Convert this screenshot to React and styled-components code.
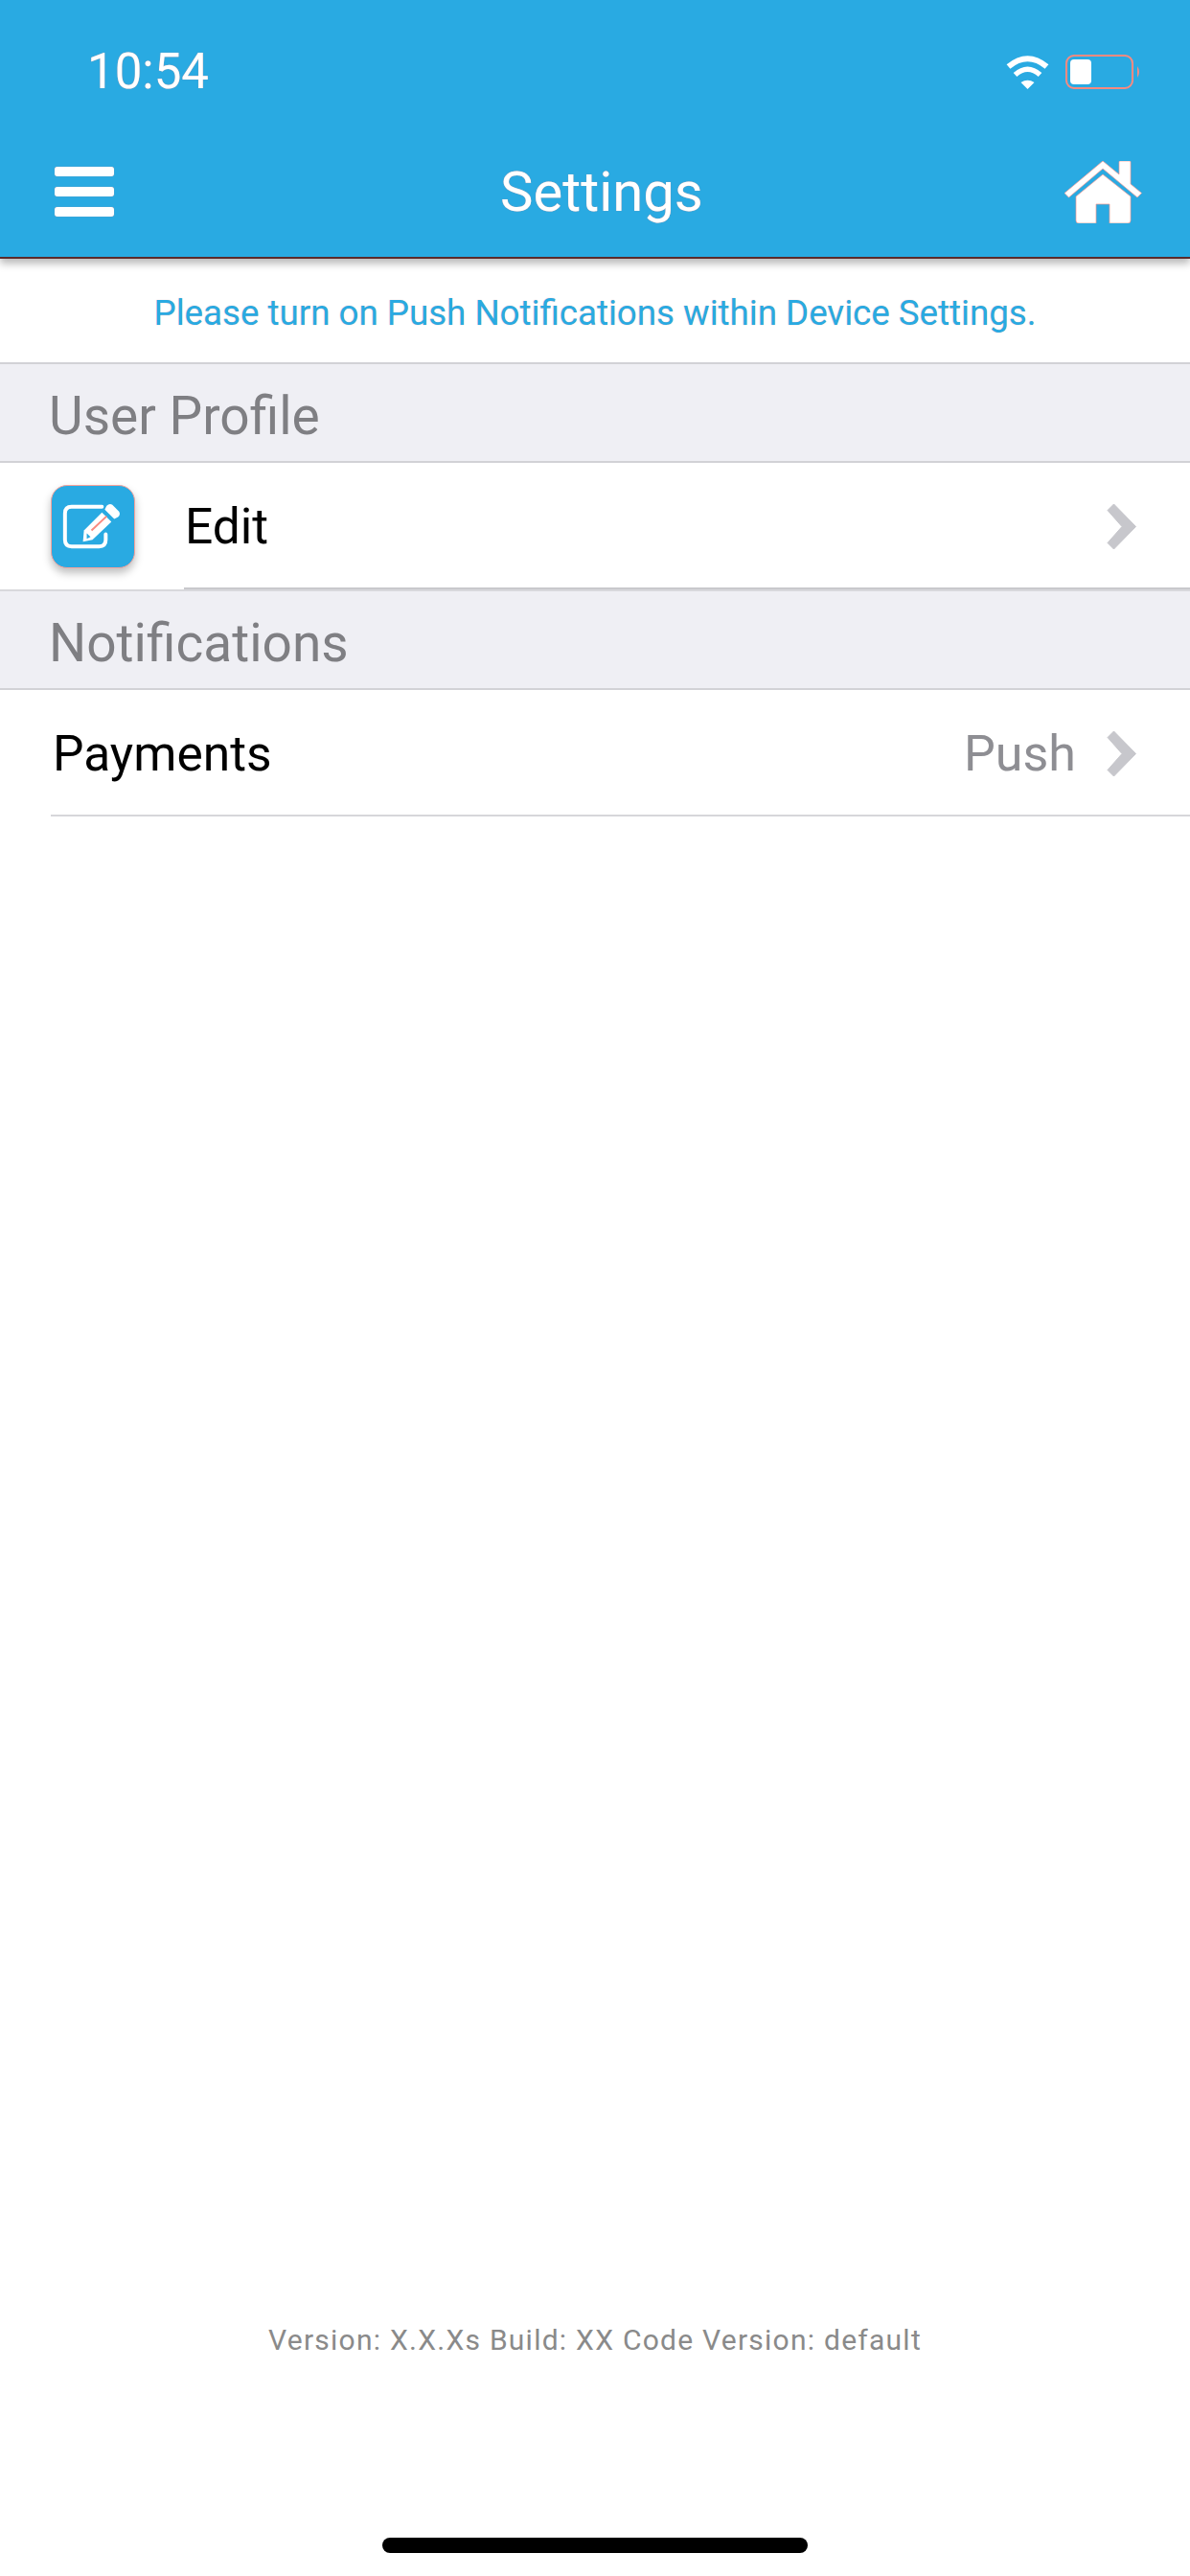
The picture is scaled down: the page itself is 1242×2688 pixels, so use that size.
import styled, { createGlobalStyle } from 'styled-components';

const GlobalStyle = createGlobalStyle`
  html, body {
    margin: 0;
    padding: 0;
    background: #ffffff;
    font-family: Roboto, "Liberation Sans", sans-serif;
  }
`;

const Screen = styled.div`
  width: 1242px;
  height: 2688px;
  display: flex;
  flex-direction: column;
  overflow: hidden;
  background: #ffffff;
`;

const Header = styled.header`
  background: #29aae2;
  height: 268px;
  border-bottom: 2px solid #5a2a2a;
  box-shadow: 0 5px 8px rgba(0, 0, 0, 0.28);
  position: relative;
  z-index: 1;
  color: #ffffff;
  text-shadow: 0 0 1px rgba(255, 130, 120, 0.75);
`;

const StatusBar = styled.div`
  height: 150px;
  display: flex;
  align-items: center;
  padding: 0 50px 0 91px;
`;

const Time = styled.span`
  font-size: 51px;
  line-height: 50px;
  flex: 1;
`;

const StatusIcons = styled.div`
  display: flex;
  align-items: center;
  gap: 16px;
`;

const NavBar = styled.div`
  height: 100px;
  display: grid;
  grid-template-columns: 465px auto 1fr;
  align-items: center;
  padding: 0 50px 0 57px;
`;

const Burger = styled.div`
  width: 62px;
  display: flex;
  flex-direction: column;
  gap: 11px;
`;

const BurgerBar = styled.span`
  height: 10px;
  border-radius: 3px;
  background: #ffffff;
  box-shadow: 0 0 1px rgba(255, 130, 120, 0.75);
`;

const Title = styled.h1`
  margin: 0;
  font-size: 58px;
  line-height: 70px;
  font-weight: 400;
`;

const HomeButton = styled.div`
  justify-self: end;
  display: flex;
`;

const Banner = styled.div`
  height: 110px;
  box-sizing: border-box;
  padding-top: 5px;
  display: flex;
  align-items: center;
  justify-content: center;
  border-bottom: 2px solid #d2d2d6;
  color: #29aae2;
  font-size: 36.7px;
  text-shadow: 0 0 1px rgba(255, 130, 120, 0.6);
`;

const SectionHeader = styled.div`
  height: 94px;
  padding: 7px 0 0 51px;
  display: flex;
  align-items: center;
  background: #efeff4;
  border-top: ${(p) => (p.$topLine ? '2px solid #d8d8dc' : 'none')};
  border-bottom: 2px solid #d2d2d6;
  color: #7f7f83;
  font-size: 55px;
`;

const Row = styled.div`
  height: 132px;
  display: flex;
  align-items: center;
  gap: 52px;
  padding: 0 55px 0 53px;
  position: relative;
`;

// line under a row, it starts where the row's label starts
const RowLine = styled.span`
  position: absolute;
  left: ${(p) => p.$left}px;
  right: 0;
  bottom: 0;
  height: 2px;
  background: ${(p) => p.$color};
`;

const IconTile = styled.div`
  width: 88px;
  height: 87px;
  border-radius: 17px;
  background: #29aae2;
  border: 1px solid #f8a39b;
  box-sizing: border-box;
  box-shadow: 0 5px 9px rgba(0, 0, 0, 0.25);
  display: flex;
`;

const RowLabel = styled.span`
  flex: 1;
  font-size: 51.5px;
  color: #000000;
  padding-left: ${(p) => p.$inset || 0}px;
`;

const RowDetail = styled.span`
  font-size: 52px;
  color: #8e8e93;
  margin-right: -20px;
`;

const Footer = styled.footer`
  margin-top: auto;
  display: flex;
  flex-direction: column;
  align-items: center;
`;

const Version = styled.div`
  font-size: 30px;
  line-height: 34px;
  letter-spacing: 1.25px;
  color: #8a8a8a;
  margin-bottom: 189px;
`;

const HomeIndicator = styled.div`
  width: 444px;
  height: 16px;
  border-radius: 8px;
  background: #000000;
  margin-bottom: 24px;
`;

const WifiIcon = () => (
  <svg width="47" height="36" viewBox="0 0 47 36">
    <path d="M3.5 12.5 Q23.5 -4 43.5 12.5" fill="none" stroke="#fff" strokeWidth="6" />
    <path d="M10.5 21 Q23.5 9.5 36.5 21" fill="none" stroke="#fff" strokeWidth="5.5" />
    <path d="M16.5 29 Q23.5 24.5 30.5 29 L23.5 36 Z" fill="#fff" />
  </svg>
);

const BatteryIcon = () => (
  <svg width="80" height="36" viewBox="0 0 80 36">
    <rect x="1" y="1" width="69" height="34" rx="8" fill="none" stroke="#f98a80" strokeWidth="2" />
    <rect x="5" y="5" width="22" height="26" rx="4" fill="#fff" />
    <path d="M75 12 Q79 18 75 24 Z" fill="#f98a80" />
  </svg>
);

const HomeIcon = () => (
  <svg width="81" height="65" viewBox="0 0 81 65">
    <path
      d="M40 0 L57 14 V1 Q57 0 58 0 H68 Q69 0 69 1 V24 L80.5 33.5 L76 38 L40 8 L4.5 38 L0 33.5 Z"
      fill="#fff"
      stroke="#fb9a90"
      strokeWidth="0.7"
    />
    <path
      d="M40 14 L69 37 V62 Q69 65 66 65 H47 V45 H33 V65 H15 Q12 65 12 62 V37 Z"
      fill="#fff"
      stroke="#fb9a90"
      strokeWidth="0.7"
    />
  </svg>
);

const EditIcon = () => (
  <svg width="86" height="85" viewBox="0 0 87 86">
    <path
      d="M53 22 H21 Q14 22 14 29 V57 Q14 64 21 64 H50 Q57 64 57 57 V51"
      fill="none"
      stroke="#fff"
      strokeWidth="4"
      strokeLinecap="round"
    />
    <path d="M53 28 L63 38 L43 57 L33 59 L34 47 Z" fill="#fff" />
    <path d="M58 21 Q61 18 64 20 L71 27 Q73 30 70 33 L66 35 L56 25 Z" fill="#fff" />
    <path d="M42 47 L58 32" stroke="#f98a80" strokeWidth="2" />
    <path d="M37 50 L41 54 L37 56 Z" fill="#29aae2" />
  </svg>
);

const Chevron = () => (
  <svg width="32" height="49" viewBox="0 0 32 49">
    <path
      d="M7.5 1 L30.5 24.5 L7.5 48 L1 41.5 L16 24.5 L1 7.5 Z"
      fill="#c7c7cc"
      stroke="#c7c7cc"
      strokeWidth="1"
      strokeLinejoin="round"
    />
  </svg>
);

const App = () => {
  return (
    <Screen>
      <GlobalStyle />
      <Header>
        <StatusBar>
          <Time>10:54</Time>
          <StatusIcons>
            <WifiIcon />
            <BatteryIcon />
          </StatusIcons>
        </StatusBar>
        <NavBar>
          <Burger>
            <BurgerBar />
            <BurgerBar />
            <BurgerBar />
          </Burger>
          <Title>Settings</Title>
          <HomeButton>
            <HomeIcon />
          </HomeButton>
        </NavBar>
      </Header>
      <Banner>Please turn on Push Notifications within Device Settings.</Banner>
      <SectionHeader>User Profile</SectionHeader>
      <Row>
        <IconTile>
          <EditIcon />
        </IconTile>
        <RowLabel>Edit</RowLabel>
        <Chevron />
        <RowLine $left={192} $color="#c8c8cc" />
      </Row>
      <SectionHeader $topLine>Notifications</SectionHeader>
      <Row>
        <RowLabel $inset={2}>Payments</RowLabel>
        <RowDetail>Push</RowDetail>
        <Chevron />
        <RowLine $left={53} $color="#d6d6da" />
      </Row>
      <Footer>
        <Version>Version: X.X.Xs Build: XX Code Version: default</Version>
        <HomeIndicator />
      </Footer>
    </Screen>
  );
};

export default App;
